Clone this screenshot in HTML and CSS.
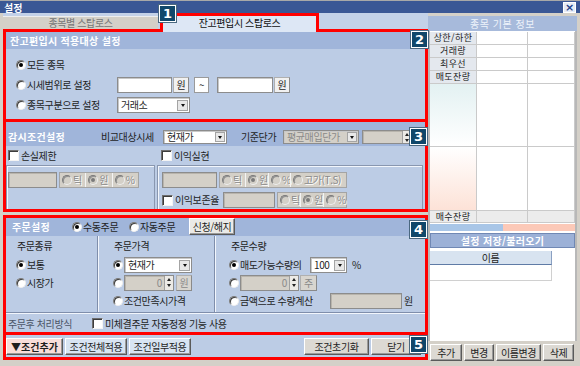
FILE: index.html
```html
<!DOCTYPE html>
<html lang="ko">
<head>
    <meta charset="UTF-8">
    <meta name="viewport" content="width=device-width, initial-scale=1.0">
    <title>설정</title>
    <link rel="stylesheet" href="styles.css">
</head>
<body>
    <div class="window">
        <div class="titlebar">
            <span class="title-text">설정</span>
            <span class="close-btn">×</span>
        </div>

        <div class="frame">
            <div class="main">
                <div class="tabs">
                    <div class="tab">종목별 스탑로스</div>
                    <div class="tab tab-active">잔고편입시 스탑로스<span class="badge badge-1">1</span></div>
                </div>

                <!-- 적용대상 -->
                <section class="box box-target">
                    <span class="badge badge-2">2</span>
                    <div class="box-head">잔고편입시 적용대상 설정</div>
                    <div class="target-body">
                        <label class="line"><span class="radio on"></span>모든 종목</label>
                        <div class="line">
                            <span class="radio"></span><span class="w-target">시세범위로 설정</span>
                            <span class="input w-price"></span><span class="btn unit">원</span>
                            <span class="tilde">~</span>
                            <span class="input w-price2"></span><span class="btn unit">원</span>
                        </div>
                        <div class="line">
                            <span class="radio"></span><span class="w-target">종목구분으로 설정</span>
                            <span class="select w-market">거래소<i class="drop"></i></span>
                        </div>
                    </div>
                </section>

                <!-- 감시조건 -->
                <section class="box box-watch">
                    <span class="badge badge-3">3</span>
                    <div class="watch-head">
                        <span class="head-title w-watch">감시조건설정</span>
                        <span class="w-compare">비교대상시세</span>
                        <span class="select w-now">현재가<i class="drop"></i></span>
                        <span class="w-base">기준단가</span>
                        <span class="select off w-avg">평균매입단가<i class="drop"></i></span>
                        <span class="input off spin w-basespin"><span class="spin-btn"><i class="up"></i><i class="down"></i></span></span>
                    </div>
                    <div class="watch-checks">
                        <label class="opt cell-loss"><span class="check"></span>손실제한</label>
                        <label class="opt cell-profit"><span class="check"></span>이익실현</label>
                    </div>
                    <div class="watch-groups">
                        <div class="group group-loss">
                            <div class="line">
                                <span class="input off w-loss"></span>
                                <span class="seg-group w-seg-loss">
                                    <span class="seg"><span class="radio off"></span>틱</span>
                                    <span class="seg"><span class="radio off on"></span>원</span>
                                    <span class="seg"><span class="radio off"></span>%</span>
                                </span>
                            </div>
                        </div>
                        <div class="group group-profit">
                            <div class="line">
                                <span class="input off w-profit"></span>
                                <span class="seg-group w-seg-profit">
                                    <span class="seg s-tick"><span class="radio off"></span>틱</span>
                                    <span class="seg s-won"><span class="radio off on"></span>원</span>
                                    <span class="seg s-pct"><span class="radio off"></span>%</span>
                                    <span class="seg s-high"><span class="radio off"></span>고가(T.S)</span>
                                </span>
                            </div>
                            <div class="line">
                                <label class="opt w-keep"><span class="check"></span>이익보존율</label>
                                <span class="input off w-keepval"></span>
                                <span class="seg-group w-seg-keep">
                                    <span class="seg"><span class="radio off"></span>틱</span>
                                    <span class="seg"><span class="radio off on"></span>원</span>
                                    <span class="seg"><span class="radio off"></span>%</span>
                                </span>
                            </div>
                        </div>
                    </div>
                </section>

                <!-- 주문설정 -->
                <section class="box box-order">
                    <span class="badge badge-4">4</span>
                    <div class="order-head">
                        <span class="head-title w-order">주문설정</span>
                        <label class="opt w-manual"><span class="radio on"></span>수동주문</label>
                        <label class="opt w-auto"><span class="radio"></span>자동주문</label>
                        <span class="btn btn-apply">신청/해지</span>
                    </div>
                    <div class="order-cols">
                        <div class="col col-kind">
                            <div class="col-title">주문종류</div>
                            <div class="col-rows">
                                <label class="line"><span class="radio on"></span>보통</label>
                                <label class="line"><span class="radio"></span>시장가</label>
                            </div>
                        </div>
                        <div class="col col-price">
                            <div class="col-title">주문가격</div>
                            <div class="col-rows">
                                <div class="line"><span class="radio on"></span><span class="select w-oprice">현재가<i class="drop"></i></span></div>
                                <div class="line">
                                    <span class="radio"></span>
                                    <span class="input off spin w-ospin">0<span class="spin-btn"><i class="up"></i><i class="down"></i></span></span>
                                    <span class="btn unit off w-unit">원</span>
                                </div>
                                <label class="line"><span class="radio"></span>조건만족시가격</label>
                            </div>
                        </div>
                        <div class="col col-qty">
                            <div class="col-title">주문수량</div>
                            <div class="col-rows">
                                <div class="line">
                                    <span class="radio on"></span><span class="w-sellable">매도가능수량의</span>
                                    <span class="select w-ratio">100<i class="drop"></i></span>
                                    <span class="pct">%</span>
                                </div>
                                <div class="line">
                                    <span class="radio"></span>
                                    <span class="input off spin w-qspin">0<span class="spin-btn"><i class="up"></i><i class="down"></i></span></span>
                                    <span class="btn unit off w-unit2">주</span>
                                </div>
                                <div class="line">
                                    <span class="radio"></span><span class="w-amount">금액으로 수량계산</span>
                                    <span class="input off w-amountval"></span>
                                    <span class="won">원</span>
                                </div>
                            </div>
                        </div>
                    </div>
                    <div class="order-after">
                        <span class="w-after">주문후 처리방식</span>
                        <label class="opt"><span class="check"></span>미체결주문 자동정정 기능 사용</label>
                    </div>
                </section>

                <!-- 하단 버튼 -->
                <section class="box box-actions">
                    <span class="badge badge-5">5</span>
                    <span class="btn btn-add">▼조건추가</span>
                    <span class="btn btn-blue">조건전체적용</span>
                    <span class="btn btn-blue">조건일부적용</span>
                    <span class="btn btn-reset">조건초기화</span>
                    <span class="btn btn-close">닫기</span>
                </section>
            </div>

            <aside class="side">
                <div class="side-head">종목 기본 정보</div>
                <div class="side-panel">
                    <div class="info-grid">
                        <div class="cell label">상한/하한</div><div class="cell"></div><div class="cell"></div>
                        <div class="cell label">거래량</div><div class="cell"></div><div class="cell"></div>
                        <div class="cell label">최우선</div><div class="cell"></div><div class="cell"></div>
                        <div class="cell label">매도잔량</div><div class="cell"></div><div class="cell"></div>
                        <div class="cell ask"></div><div class="cell"></div><div class="cell"></div>
                        <div class="cell bid"></div><div class="cell"></div><div class="cell"></div>
                        <div class="cell label gray">매수잔량</div><div class="cell gray"></div><div class="cell gray"></div>
                    </div>
                    <div class="color-bar"><span class="bar-buy"></span><span class="bar-sell"></span></div>
                    <div class="save-head">설정 저장/불러오기</div>
                    <div class="name-head">이름</div>
                    <div class="name-row"></div>
                </div>
                <div class="side-buttons">
                    <span class="btn w-plus">추가</span>
                    <span class="btn w-edit">변경</span>
                    <span class="btn w-rename">이름변경</span>
                    <span class="btn w-del">삭제</span>
                </div>
            </aside>
        </div>
    </div>
</body>
</html>
```

FILE: styles.css
```css
* {
    margin: 0;
    padding: 0;
    box-sizing: border-box;
}

body {
    width: 580px;
    height: 366px;
    overflow: hidden;
    background-color: #d4d0c8;
    font-family: "Noto Sans CJK KR", "Noto Sans", sans-serif;
    font-size: 10px;
    line-height: 12px;
    letter-spacing: -0.4px;
    color: #1e1e1e;
}

.window {
    width: 580px;
    height: 366px;
    background-color: #d4d0c8;
}

/* 타이틀바 */
.titlebar {
    height: 13px;
    background-color: #3a5795;
    border-top: 1px solid #a8a8a8;
    display: flex;
    align-items: center;
    justify-content: space-between;
    padding: 0 4px 0 4px;
}

.title-text {
    color: #fff;
    font-weight: bold;
    letter-spacing: 0;
    padding-top: 2px;
}

.close-btn {
    width: 13px;
    height: 11px;
    background-color: #e6ecf6;
    border: 1px solid #fff;
    color: #22418a;
    font: bold 11px/9px "DejaVu Sans", sans-serif;
    text-align: center;
    letter-spacing: 0;
}

.frame {
    display: flex;
    height: 353px;
    padding-left: 3px;
}

.main {
    width: 425px;
    display: flex;
    flex-direction: column;
}

/* 탭 */
.tabs {
    height: 16px;
    display: flex;
    align-items: flex-end;
    background-color: #c3d1e8;
}

.tab {
    width: 155px;
    height: 13px;
    margin-right: 2px;
    background-color: #d4d0c8;
    border-top: 1px solid #eeeeee;
    color: #777;
    text-align: center;
    line-height: 12px;
}

.tab-active {
    position: relative;
    z-index: 1;
    width: 159px;
    height: 19px;
    margin: 0 0 -3px 0;
    border: 3px solid #ff0000;
    border-bottom: 0;
    background-color: #dde7f5;
    color: #111;
    line-height: 14px;
}

/* 번호 배지 */
.badge {
    position: absolute;
    z-index: 2;
    width: 17px;
    height: 17px;
    background-color: #10476a;
    border: 1px solid #fff;
    box-shadow: 0 0 0 1px #4a6880;
    color: #fff;
    font: bold 13px/15px "DejaVu Sans", sans-serif;
    letter-spacing: 0;
    text-align: center;
}

.badge-1 { left: -4px; top: -11px; }
.badge-2 { right: -3px; top: -1px; }
.badge-3 { right: -2px; top: 6px; }
.badge-4 { right: -2px; top: 3px; }
.badge-5 { right: -2px; top: 1px; }

/* 빨간 박스 영역 */
.box {
    position: relative;
    border: 3px solid #ff0000;
    background-color: #bccce5;
}

.box-target { height: 93px; }
.box-watch { height: 90px; border-top: 0; }
.box-order { height: 120px; margin-top: 3px; }
.box-actions { height: 25px; border-top: 0; }

.box-head {
    height: 17px;
    background-color: #a0b5da;
    color: #fff;
    font-weight: bold;
    letter-spacing: 0.3px;
    line-height: 17px;
    padding-left: 4px;
}

.head-title {
    color: #fff;
    font-weight: bold;
    letter-spacing: 0.3px;
}

.line {
    display: flex;
    align-items: center;
    height: 16px;
}

.opt {
    display: flex;
    align-items: center;
}

/* 컨트롤 */
.radio {
    position: relative;
    flex: none;
    width: 10px;
    height: 10px;
    margin-right: 1px;
    border-radius: 50%;
    background-color: #fff;
    border: 1px solid;
    border-color: #7a7a7a #eeeeee #eeeeee #7a7a7a;
    box-shadow: inset 1px 1px 0 #3c3c3c;
}

.radio.on::after {
    content: "";
    position: absolute;
    left: 2px;
    top: 2px;
    width: 4px;
    height: 4px;
    border-radius: 50%;
    background-color: #000;
}

.radio.off {
    background-color: #d4d0c8;
    box-shadow: inset 1px 1px 0 #909090;
}

.radio.off.on::after {
    background-color: #7a7a7a;
}

.check {
    flex: none;
    width: 11px;
    height: 11px;
    margin-right: 2px;
    background-color: #fff;
    border: 1px solid;
    border-color: #6e6e6e #f4f4f4 #f4f4f4 #6e6e6e;
    box-shadow: inset 1px 1px 0 #3c3c3c;
}

.input {
    flex: none;
    display: flex;
    align-items: center;
    height: 16px;
    background-color: #fff;
    border: 1px solid #8c8c8c;
    box-shadow: inset 1px 1px 0 #c8c8c8;
}

.input.off {
    background-color: #d4d0c8;
    color: #8a8a8a;
    box-shadow: inset 1px 1px 0 #b8b4ac;
}

.spin {
    justify-content: flex-end;
}

.spin-btn {
    width: 9px;
    height: 100%;
    margin-left: 2px;
    border-left: 1px solid #a0a0a0;
    background-color: #eceae6;
}

.spin-btn i {
    display: block;
    width: 0;
    height: 0;
    margin: 2px auto 0;
    border-left: 2px solid transparent;
    border-right: 2px solid transparent;
}

.spin-btn .up { border-bottom: 3px solid #222; }
.spin-btn .down { border-top: 3px solid #222; margin-top: 3px; }

.select {
    flex: none;
    display: flex;
    align-items: center;
    height: 16px;
    padding-left: 3px;
    background-color: #fff;
    border: 1px solid #8c8c8c;
    box-shadow: inset 1px 1px 0 #c8c8c8;
}

.select.off {
    background-color: #d4d0c8;
    color: #8a8a8a;
}

.drop {
    display: flex;
    align-items: center;
    justify-content: center;
    width: 11px;
    height: 11px;
    margin: 0 1px 0 auto;
    background-color: #e8e8e8;
    border: 1px solid #a4a4a4;
}

.drop::after {
    content: "";
    border-left: 2px solid transparent;
    border-right: 2px solid transparent;
    border-top: 3px solid #111;
}

.btn {
    flex: none;
    display: flex;
    align-items: center;
    justify-content: center;
    height: 17px;
    background-color: #dcd9d3;
    border: 1px solid;
    border-color: #ffffff #5a5a5a #5a5a5a #ffffff;
    box-shadow: inset -1px -1px 0 #9a9a9a;
    color: #1e1e1e;
}

.btn.unit {
    height: 16px;
    background-color: #f1f1f1;
    border-color: #b0b0b0 #8a8a8a #8a8a8a #b0b0b0;
    box-shadow: none;
}

.btn.unit.off {
    background-color: #d8d5cf;
    color: #8a8a8a;
}

/* 적용대상 영역 */
.target-body {
    display: flex;
    flex-direction: column;
    gap: 4px;
    padding: 8px 0 0 10px;
}

.w-target { width: 90px; }
.w-price { width: 55px; }
.w-price2 { width: 56px; margin-left: 8px; }
.target-body .unit { width: 16px; margin-left: 1px; }

.tilde {
    width: 15px;
    height: 16px;
    margin-left: 5px;
    background-color: #fff;
    border: 1px solid #9a9a9a;
    text-align: center;
    line-height: 13px;
}

.w-market { width: 73px; }

/* 감시조건 영역 */
.watch-head {
    height: 24px;
    display: flex;
    align-items: center;
    padding: 8px 0 2px 2px;
    background-color: #a0b5da;
}

.watch-head .select,
.watch-head .input {
    height: 14px;
}

.watch-head .drop {
    width: 10px;
    height: 10px;
}

.w-watch { width: 93px; }
.w-compare { width: 62px; }
.w-now { width: 64px; }
.w-base { width: 42px; margin-left: 14px; }
.w-avg { width: 76px; }
.w-basespin { width: 50px; margin-left: 3px; }

.watch-checks {
    height: 19px;
    display: flex;
    align-items: center;
}

.cell-loss { width: 151px; padding-left: 2px; }
.cell-profit { padding-left: 4px; }

.watch-groups {
    display: flex;
    height: 44px;
}

.group {
    display: flex;
    flex-direction: column;
    gap: 4px;
    padding-top: 6px;
    border: 1px solid #8997b0;
    border-bottom: 0;
    box-shadow: inset 1px 1px 0 #f2f6fc;
}

.group-loss { width: 149px; padding-left: 1px; }
.group-profit { width: 266px; margin-left: 2px; padding-left: 4px; }

.w-loss { width: 49px; }
.w-profit { width: 55px; }
.w-keep { width: 61px; }
.w-keepval { width: 52px; }

.seg-group {
    display: flex;
    height: 16px;
    margin-left: 2px;
    background-color: #d4d0c8;
    border: 1px solid #a4a4a4;
}

.seg {
    flex: 1;
    display: flex;
    align-items: center;
    padding-left: 2px;
    border-left: 1px solid #f4f4f4;
    color: #8a8a8a;
    text-shadow: 1px 1px 0 #fff;
}

.seg:first-child { border-left: 0; }

.w-seg-loss { width: 80px; }
.w-seg-profit { width: 128px; }
.w-seg-keep { width: 70px; }

.s-tick { flex: none; width: 25px; }
.s-won { flex: none; width: 23px; }
.s-pct { flex: none; width: 22px; }

/* 주문설정 영역 */
.order-head {
    height: 18px;
    display: flex;
    align-items: center;
    padding-left: 6px;
    background-color: #a0b5da;
}

.w-order { width: 60px; }
.w-manual { width: 57px; }
.w-auto { width: 60px; }

.btn-apply {
    align-self: flex-start;
    width: 46px;
    background-color: #ebeae7;
}

.order-cols {
    display: flex;
    height: 76px;
}

.col {
    padding-top: 4px;
}

.col-kind {
    width: 92px;
    padding-left: 10px;
    border-right: 1px solid #7f8eab;
    box-shadow: 1px 0 0 #f2f6fc;
}

.col-price {
    width: 117px;
    padding-left: 15px;
    border-right: 1px solid #7f8eab;
    box-shadow: 1px 0 0 #f2f6fc;
}

.col-qty {
    flex: 1;
    padding-left: 14px;
}

.col-title {
    height: 12px;
    margin-bottom: 5px;
    padding-left: 1px;
}

.col-qty .col-title { padding-left: 2px; }

.col-rows {
    display: flex;
    flex-direction: column;
    gap: 2px;
}

.w-oprice { width: 68px; }
.w-ospin { width: 50px; }
.w-unit { width: 16px; margin-left: 2px; }
.w-sellable { width: 70px; }
.w-ratio { width: 37px; }
.pct { margin-left: 5px; }
.w-qspin { width: 59px; }
.w-unit2 { width: 17px; margin-left: 1px; }
.w-amount { width: 90px; }
.w-amountval { width: 72px; }
.won { margin-left: 2px; }

.order-after {
    height: 20px;
    display: flex;
    align-items: center;
    padding: 2px 0 0 2px;
    border-top: 1px solid #7f8eab;
    box-shadow: inset 0 1px 0 #f2f6fc;
}

.w-after {
    width: 84px;
    color: #4b5568;
}

/* 하단 버튼 영역 */
.box-actions {
    display: flex;
    padding-top: 3px;
}

.btn-add {
    width: 57px;
    background-color: #f8ddd9;
    font-weight: bold;
    letter-spacing: 0;
}

.btn-blue {
    width: 62px;
    margin-left: 2px;
    background-color: #d8e4f2;
}

.btn-reset {
    width: 65px;
    margin-left: auto;
}

.btn-close {
    width: 50px;
    margin: 0 4px 0 2px;
}

/* 오른쪽 패널 */
.side {
    width: 149px;
    display: flex;
    flex-direction: column;
    padding-top: 3px;
}

.side-head {
    height: 15px;
    background-color: #a7badb;
    color: #eef3fa;
    text-align: center;
    line-height: 15px;
    letter-spacing: 0.5px;
}

.side-panel {
    flex: 1;
    background-color: #fff;
    border-left: 2px solid #b8b8b8;
    border-right: 2px solid #b8b8b8;
}

.info-grid {
    display: grid;
    grid-template-columns: 47px 51px 47px;
    grid-template-rows: repeat(4, 13px) 63px 64px 12px;
    margin-top: 1px;
}

.cell {
    border-right: 1px solid #cacaca;
    border-bottom: 1px solid #cacaca;
}

.cell.label {
    background-color: #e4e8ee;
    color: #222;
    font-size: 9px;
    text-align: center;
    line-height: 12px;
    letter-spacing: 0.4px;
}

.cell.ask { background: linear-gradient(#e3f1f2, #ffffff); }
.cell.bid { background: linear-gradient(#ffffff, #fde2d7); }
.cell.gray { background-color: #ececec; line-height: 11px; }

.color-bar {
    display: flex;
    height: 7px;
    margin-top: 1px;
}

.bar-buy {
    width: 73px;
    background-color: #a9c6e7;
}

.bar-sell {
    flex: 1;
    background-color: #fcc9b8;
}

.save-head {
    height: 15px;
    margin-top: 2px;
    background-color: #9cb1d7;
    border: 1px solid #7088b4;
    color: #fff;
    font-weight: bold;
    text-align: center;
    line-height: 13px;
    letter-spacing: 0.3px;
}

.name-head {
    width: 122px;
    height: 14px;
    margin-top: 3px;
    background-color: #d8e3f0;
    border-bottom: 1px solid #5f7ba6;
    border-right: 1px solid #8aa0c2;
    text-align: center;
    line-height: 13px;
}

.name-row {
    width: 122px;
    height: 16px;
    border-right: 1px solid #d0d0d0;
    border-bottom: 1px solid #d0d0d0;
}

.side-buttons {
    height: 25px;
    display: flex;
    gap: 2px;
    padding: 3px 0 0 2px;
}

.w-plus { width: 32px; }
.w-edit { width: 30px; }
.w-rename { width: 45px; }
.w-del { width: 31px; }
```
